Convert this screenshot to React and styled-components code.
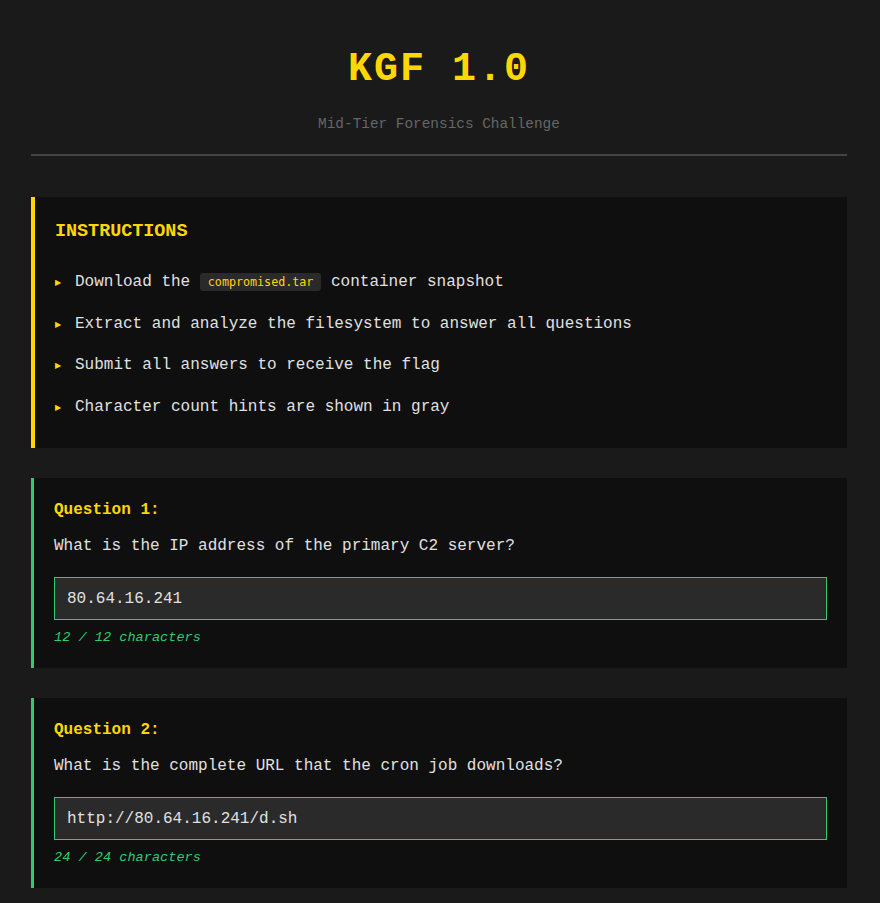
import React, { useState } from "react";
import styled, { createGlobalStyle } from "styled-components";

const GlobalStyle = createGlobalStyle`
  * { box-sizing: border-box; }
  body {
    margin: 0;
    background: #1a1a1a;
    color: #e0e0e0;
    font-family: "Liberation Mono", "Courier New", monospace;
  }
`;

const Page = styled.div`
  padding: 47px 33px 32px 31px;
`;

const Header = styled.header`
  text-align: center;
  padding-bottom: 22px;
  border-bottom: 2px solid #444;
  margin-bottom: 41px;
`;

const Title = styled.h1`
  margin: 0 0 24px;
  font-size: 40px;
  font-weight: bold;
  letter-spacing: 2px;
  color: #ffd700;
`;

const Subtitle = styled.p`
  margin: 0;
  font-size: 14.4px;
  color: #666;
`;

const Panel = styled.section`
  background: #0f0f0f;
  border-left: ${(p) => (p.$accent === "green" ? "3px solid #2ecc71" : "4px solid #ffd700")};
  padding: ${(p) => (p.$accent === "green" ? "23px 20px 23px" : "24px 20px 20px")};
  margin-bottom: 30px;
`;

const PanelTitle = styled.h2`
  margin: 0 0 20px;
  font-size: 18.4px;
  color: #ffd700;
`;

const List = styled.ul`
  list-style: none;
  margin: 0;
  padding: 0;
`;

const Item = styled.li`
  padding: 8px 0;
  font-size: 16px;
  line-height: 25.6px;
  display: flex;
  align-items: center;
`;

const Bullet = styled.span`
  display: inline-block;
  width: 20px;
  flex: none;
  color: #ffd700;
  font-family: "DejaVu Sans", sans-serif;
  font-size: 8px;
`;

const Code = styled.code`
  background: #2a2a2a;
  color: #ffd700;
  font-family: "DejaVu Sans Mono", monospace;
  font-size: 11.7px;
  padding: 2px 8px;
  border-radius: 3px;
`;

const Label = styled.div`
  font-size: 16px;
  font-weight: bold;
  color: #ffd700;
  margin-bottom: 18px;
`;

const QuestionText = styled.div`
  font-size: 16px;
  margin-bottom: 22px;
`;

const Input = styled.input`
  display: block;
  width: 100%;
  height: 43px;
  padding: 0 12px;
  background: #2a2a2a;
  border: 1px solid #2ecc71;
  color: #e0e0e0;
  font-family: "Liberation Mono", "Courier New", monospace;
  font-size: 16px;
  outline: none;

  &:hover,
  &:focus {
    border-color: #2ecc71;
  }
`;

const Count = styled.div`
  margin-top: 10px;
  font-size: 13.6px;
  font-style: italic;
  color: #2ecc71;
`;

const instructions = [
  <>Download the <Code>compromised.tar</Code> container snapshot</>,
  "Extract and analyze the filesystem to answer all questions",
  "Submit all answers to receive the flag",
  "Character count hints are shown in gray",
];

const questions = [
  { q: "What is the IP address of the primary C2 server?", a: "80.64.16.241" },
  { q: "What is the complete URL that the cron job downloads?", a: "http://80.64.16.241/d.sh" },
];

function Question({ index, q, initial }) {
  const [value, setValue] = useState(initial);
  return (
    <Panel $accent="green">
      <Label>Question {index}:</Label>
      <QuestionText>{q}</QuestionText>
      <Input value={value} onChange={(e) => setValue(e.target.value)} />
      <Count>
        {value.length} / {initial.length} characters
      </Count>
    </Panel>
  );
}

export default function App() {
  return (
    <>
      <GlobalStyle />
      <Page>
        <Header>
          <Title>KGF 1.0</Title>
          <Subtitle>Mid-Tier Forensics Challenge</Subtitle>
        </Header>
        <Panel>
          <PanelTitle>INSTRUCTIONS</PanelTitle>
          <List>
            {instructions.map((t, i) => (
              <Item key={i}>
                <Bullet>▶</Bullet>
                <span>{t}</span>
              </Item>
            ))}
          </List>
        </Panel>
        {questions.map((item, i) => (
          <Question key={i} index={i + 1} q={item.q} initial={item.a} />
        ))}
      </Page>
    </>
  );
}
